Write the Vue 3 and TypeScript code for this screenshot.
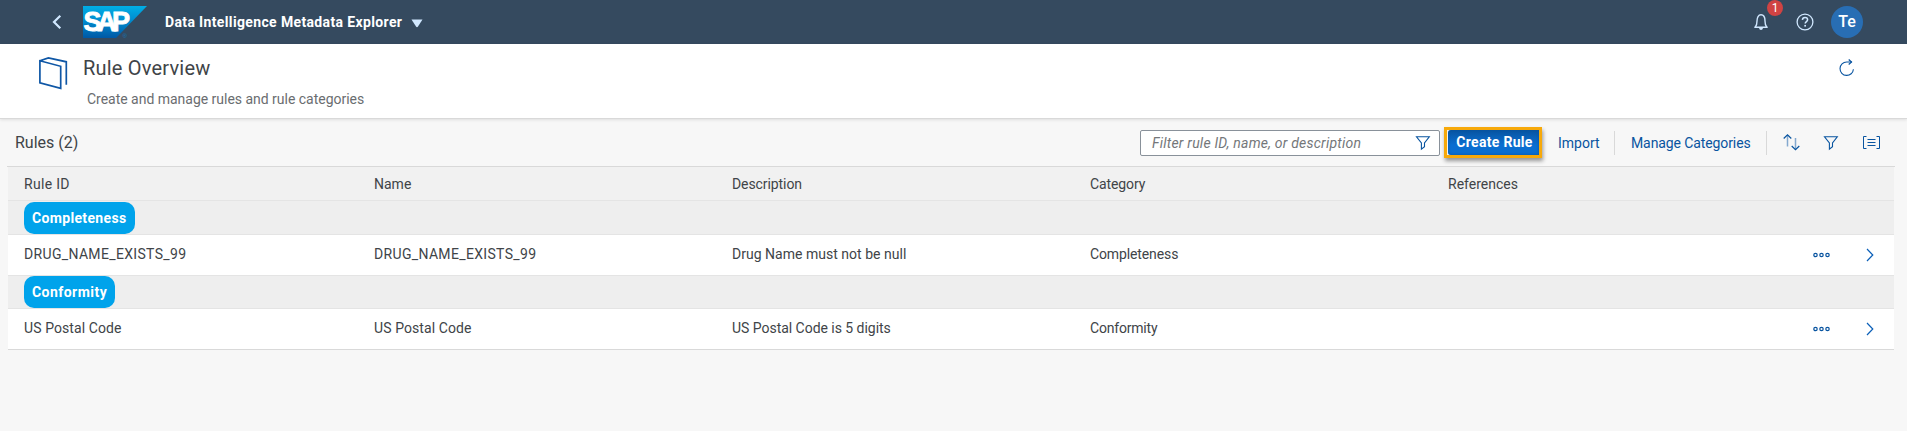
<script setup lang="ts">
interface Cell {
  text: string
  tracking: number
}
interface Group {
  name: string
  size: 'tall' | 'short'
  cells: Cell[]
}

const columns: Cell[] = [
  { text: 'Rule ID', tracking: 0.3 },
  { text: 'Name', tracking: 0 },
  { text: 'Description', tracking: -0.08 },
  { text: 'Category', tracking: -0.1 },
  { text: 'References', tracking: 0 },
]

const groups: Group[] = [
  {
    name: 'Completeness',
    size: 'tall',
    cells: [
      { text: 'DRUG_NAME_EXISTS_99', tracking: 0.34 },
      { text: 'DRUG_NAME_EXISTS_99', tracking: 0.34 },
      { text: 'Drug Name must not be null', tracking: 0.02 },
      { text: 'Completeness', tracking: -0.12 },
    ],
  },
  {
    name: 'Conformity',
    size: 'short',
    cells: [
      { text: 'US Postal Code', tracking: 0.09 },
      { text: 'US Postal Code', tracking: 0.09 },
      { text: 'US Postal Code is 5 digits', tracking: -0.03 },
      { text: 'Conformity', tracking: -0.2 },
    ],
  },
]

const spacing = (cell: Cell) => ({ letterSpacing: `${cell.tracking}px` })
</script>

<template>
  <div class="page">
    <header class="shell">
      <svg class="back" width="10" height="16" viewBox="0 0 10 16"><path d="M8.300 1.800 2 8l6.300 6.200" fill="none" stroke="#d1e8ff" stroke-width="2.200" /></svg>
      <svg class="logo" width="64" height="32" viewBox="0 0 64 32">
        <defs>
          <linearGradient id="brand" x1="0" y1="0" x2="0" y2="1">
            <stop offset="0" stop-color="#00aee6" />
            <stop offset="0.5" stop-color="#0088cc" />
            <stop offset="1" stop-color="#0058a5" />
          </linearGradient>
        </defs>
        <path d="M0 0H64L33 32H0Z" fill="url(#brand)" />
        <text class="logo-text" x="0.500" y="25.300" textLength="46.500" lengthAdjust="spacing">SAP</text>
        <text class="logo-mark" x="39.500" y="32">®</text>
      </svg>
      <span class="product">Data Intelligence Metadata Explorer</span>
      <svg class="caret" width="12" height="9" viewBox="0 0 12 9"><path d="M.5.5h11L7 7.600q-1 1.200-2 0Z" fill="#d1e8ff" /></svg>
      <div class="shell-end">
        <div class="bell">
          <svg width="16" height="18" viewBox="0 0 16 18"><path d="M1.300 14.200h13.400M2.300 14c1.600-1.600 1.700-3.200 1.700-6C4 4.300 5.400 1.800 8 1.800S12 4.300 12 8c0 2.800.1 4.400 1.700 6" fill="none" stroke="#d1e8ff" stroke-width="1.400" /><path d="M6 15h4q-.4 2-2 2T6 15Z" fill="#d1e8ff" /></svg>
          <span class="count">1</span>
        </div>
        <svg class="help" width="18" height="18" viewBox="0 0 18 18"><circle cx="9" cy="9" r="7.900" fill="none" stroke="#d1e8ff" stroke-width="1.300" /><path d="M6.400 6.900C6.500 5.300 7.500 4.500 9 4.500s2.600.9 2.600 2.200c0 1.900-2.400 1.800-2.400 3.900" fill="none" stroke="#d1e8ff" stroke-width="1.500" /><rect x="8.300" y="11.900" width="1.700" height="1.700" fill="#d1e8ff" /></svg>
        <span class="avatar">Te</span>
      </div>
    </header>

    <section class="title-bar">
      <svg class="book" width="29" height="33" viewBox="0 0 29 33"><path d="M.9 3.800v22.100l20.800 5.500V9.300ZM.9 3.800 9.400.9l17.900 3.900v23" fill="none" stroke="#0f57a6" stroke-width="1.700" /></svg>
      <div class="titles">
        <h1>Rule Overview</h1>
        <p>Create and manage rules and rule categories</p>
      </div>
      <svg class="refresh" width="16" height="18" viewBox="0 0 16 18"><path d="M14.400 10.200A6.700 6.700 0 1 1 7.700 3H13" fill="none" stroke="#0854a0" stroke-width="1.100" /><path d="m9.700.5 2.800 2.500-2.800 2.500" fill="none" stroke="#0854a0" stroke-width="1.200" /></svg>
    </section>

    <main class="content">
      <div class="toolbar">
        <h2>Rules (2)</h2>
        <div class="search">
          <span>Filter rule ID, name, or description</span>
          <svg width="16" height="16" viewBox="0 0 16 16"><path d="M1.500 1.800h12.800L9.500 8v3.700l-3.100 2.500V8Z" fill="none" stroke="#0854a0" stroke-width="1.100" /></svg>
        </div>
        <div class="highlight"><button class="create">Create Rule</button></div>
        <span class="link import">Import</span>
        <i class="divider"></i>
        <span class="link manage">Manage Categories</span>
        <i class="divider"></i>
        <svg class="sort" width="17" height="17" viewBox="0 0 17 17"><path d="M4.500 12.500V1M12.500 4v11.500" fill="none" stroke="#84a9cf" stroke-width="1.500" /><path d="m.7 4.500 3.800-3.600 3.800 3.600M8.700 12l3.800 3.600 3.800-3.600" fill="none" stroke="#0854a0" stroke-width="1.200" /></svg>
        <svg class="funnel" width="16" height="16" viewBox="0 0 16 16"><path d="M1.500 1.800h12.800L9.500 8v3.700l-3.100 2.500V8Z" fill="none" stroke="#0854a0" stroke-width="1.100" /></svg>
        <svg class="group" width="17" height="13" viewBox="0 0 17 13"><path d="M3.500.5h-3v12h3M13.500.5h3v12h-3M4.500 3.500h8M4.500 6.500h8M4.500 9.500h8" fill="none" stroke="#0854a0" /></svg>
      </div>

      <div class="table">
        <div class="row head">
          <span v-for="column in columns" :key="column.text" :style="spacing(column)">{{ column.text }}</span>
        </div>
        <template v-for="group in groups" :key="group.name">
          <div class="band" :class="group.size"><span class="tag">{{ group.name }}</span></div>
          <div class="row item">
            <span v-for="(cell, index) in group.cells" :key="index" class="value" :style="spacing(cell)">{{ cell.text }}</span>
            <div class="actions">
              <svg width="17" height="6" viewBox="0 0 17 6" fill="none" stroke="#0854a0" stroke-width="1.200"><circle cx="2.500" cy="3" r="1.700" /><circle cx="8.500" cy="3" r="1.700" /><circle cx="14.500" cy="3" r="1.700" /></svg>
              <svg class="next" width="8" height="14" viewBox="0 0 8 14"><path d="m1 1 5.800 6L1 13" fill="none" stroke="#0a5fb8" stroke-width="1.200" /></svg>
            </div>
          </div>
        </template>
      </div>
    </main>
  </div>
</template>

<style>
body {
  margin: 0;
  background: #f7f7f7;
}
</style>

<style scoped>
.page {
  height: 431px;
  overflow: hidden;
  background: #f7f7f7;
  color: #404448;
  font-family: Roboto, "Noto Sans", sans-serif;
  font-size: 14px;
  white-space: nowrap;
}
svg {
  display: block;
  flex: none;
}
.shell {
  display: flex;
  align-items: center;
  box-sizing: border-box;
  height: 44px;
  padding: 0 44px 0 52px;
  background: #354a5f;
}
.logo {
  margin-left: 21px;
}
.logo-text {
  font: bold 27px "Liberation Sans", Arial, sans-serif;
  fill: #fff;
  stroke: #fff;
  stroke-width: 0.9px;
}
.logo-mark {
  font: 6px "Liberation Sans", Arial, sans-serif;
  fill: #1377b8;
}
.product {
  width: 237px;
  margin-left: 18px;
  color: #fff;
  font-weight: 700;
  letter-spacing: 0.36px;
}
.caret {
  margin: 2px 0 0 9px;
}
.shell-end {
  display: flex;
  align-items: center;
  margin-left: auto;
}
.bell {
  position: relative;
}
.count {
  position: absolute;
  top: -13px;
  left: 14px;
  width: 16px;
  height: 16px;
  border-radius: 50%;
  background: #d04343;
  color: #fff;
  font-size: 12px;
  line-height: 16px;
  text-align: center;
}
.help {
  margin-left: 27px;
}
.avatar {
  width: 32px;
  height: 32px;
  margin-left: 17px;
  border-radius: 50%;
  background: #286eb4;
  color: #fff;
  font-size: 16px;
  font-weight: 500;
  line-height: 32px;
  text-align: center;
}
.title-bar {
  display: flex;
  align-items: flex-start;
  position: relative;
  box-sizing: border-box;
  height: 75px;
  padding: 13px 52px 0 39px;
  border-bottom: 1px solid #d9d9d9;
  background: #fff;
  box-shadow: 0 1px 3px rgba(0, 0, 0, 0.1);
}
.titles {
  margin-left: 15px;
}
h1 {
  margin: -2px 0 0;
  font-size: 20px;
  font-weight: 400;
  line-height: 26px;
  letter-spacing: 0.2px;
}
p {
  margin: 8px 0 0 4px;
  color: #6a6d70;
  line-height: 20px;
  letter-spacing: -0.02px;
}
.refresh {
  margin: 2px 0 0 auto;
}
.content {
  padding: 0 12px 0 7px;
}
.toolbar {
  display: flex;
  align-items: center;
  box-sizing: border-box;
  height: 48px;
  padding: 0 15px 0 8px;
  border-bottom: 1px solid #d9d9d9;
}
h2 {
  margin: 0 auto 0 0;
  font-size: 16px;
  font-weight: 400;
}
.search {
  display: flex;
  align-items: center;
  justify-content: space-between;
  box-sizing: border-box;
  width: 300px;
  height: 26px;
  padding: 0 8px 0 11px;
  border: 1px solid #89919a;
  border-radius: 2px;
  background: #fff;
  color: #74777a;
  font-style: italic;
  letter-spacing: 0.22px;
}
.highlight {
  box-sizing: border-box;
  width: 98px;
  height: 31px;
  margin: -1px 0 0 4px;
  border: 3px solid #f7a90a;
  background: #f2f2f2;
  box-shadow: 1px 3px 4px rgba(0, 0, 0, 0.4);
}
.create {
  display: block;
  width: 91px;
  height: 25px;
  margin-left: 1px;
  padding: 0 0 0 2px;
  border: 0;
  border-radius: 3px 0 0 3px;
  background: linear-gradient(#0854a0, #0a6ed1 60%);
  box-shadow: inset 0 0 3px #0854a0;
  color: #fff;
  font: bold 14px Roboto, sans-serif;
  letter-spacing: 0.3px;
}
.link {
  color: #0854a0;
}
.import {
  width: 56px;
  margin-left: 16px;
}
.manage {
  width: 135px;
  margin-left: 16px;
  letter-spacing: -0.1px;
}
.divider {
  width: 1px;
  height: 24px;
  background: #d9d9d9;
}
.sort {
  margin-left: 16px;
}
.funnel {
  margin-left: 23px;
}
.group {
  margin-left: 24px;
}
.table {
  margin: 0 1px;
}
.row {
  display: grid;
  grid-template-columns: 350px 358px 358px 358px 1fr;
  align-items: center;
  box-sizing: border-box;
  padding-left: 16px;
}
.head {
  height: 34px;
  border-bottom: 1px solid #e4e4e4;
  background: #f1f1f1;
}
.band {
  display: flex;
  align-items: flex-end;
  box-sizing: border-box;
  padding-left: 16px;
  border-bottom: 1px solid #e4e4e4;
  background: #eee;
}
.tall {
  height: 34px;
}
.short {
  height: 33px;
}
.tag {
  height: 32px;
  padding: 0 8px;
  border-radius: 10px;
  background: #00a3eb;
  color: #fff;
  font-weight: 700;
  line-height: 32px;
  letter-spacing: 0.34px;
}
.short .tag {
  letter-spacing: 0.46px;
}
.item {
  height: 41px;
  border-bottom: 1px solid #e4e4e4;
  background: #fff;
}
.item:last-child {
  border-color: #d9d9d9;
}
.value {
  padding-bottom: 2px;
}
.actions {
  display: flex;
  grid-column: 5;
  align-items: center;
  justify-content: flex-end;
  padding-right: 20px;
}
.next {
  margin-left: 36px;
}
</style>
